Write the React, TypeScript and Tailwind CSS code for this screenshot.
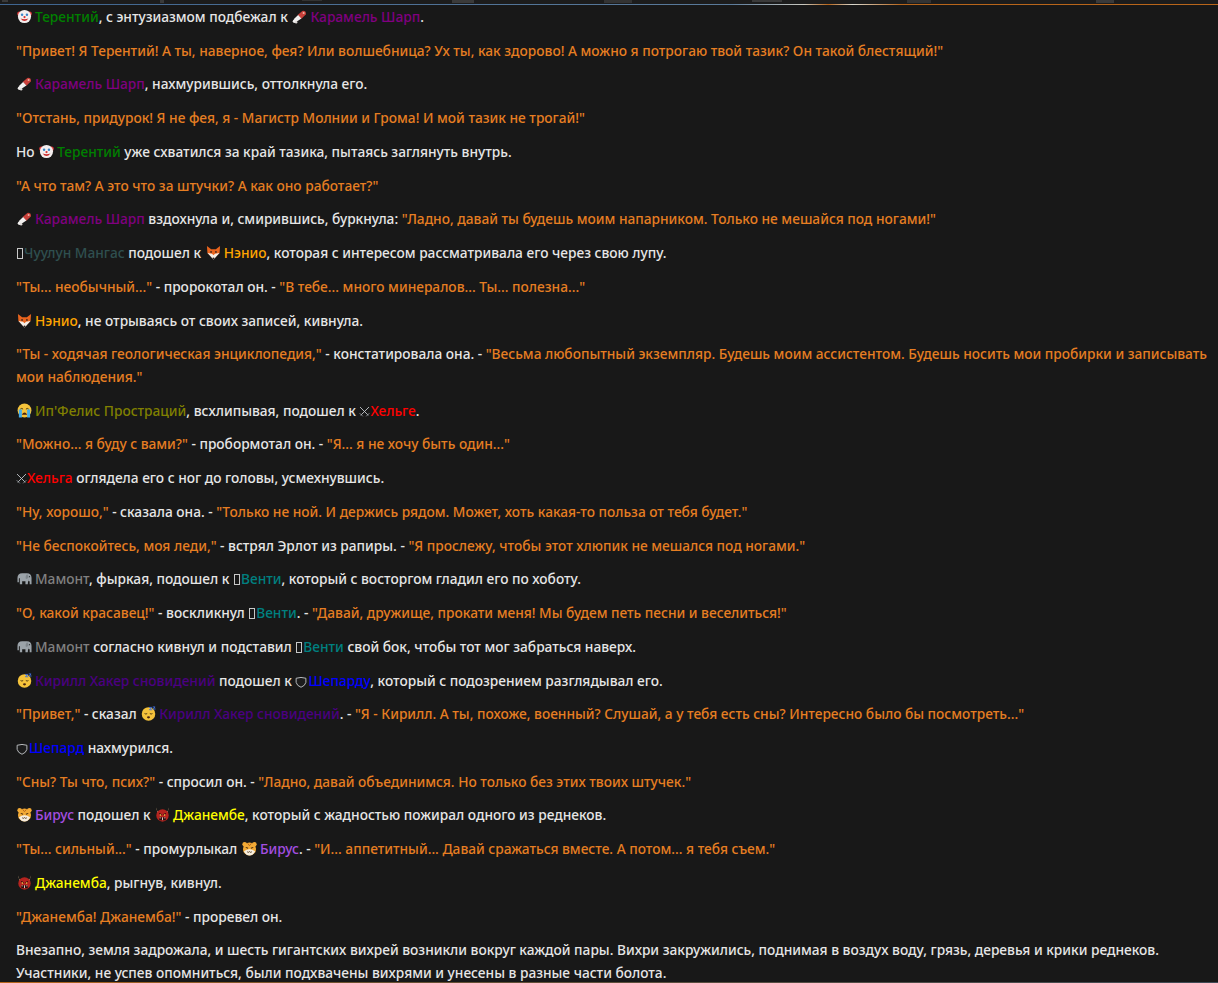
import type { ReactNode } from "react";

// small inline drawings for the emoji in the log
function Icon({ children }: { children: ReactNode }) {
  return (
    <svg viewBox="0 0 16 16" className="inline-block w-[15px] h-[15px] ml-[1px] mr-[3px] align-[-2px]">
      {children}
    </svg>
  );
}

const Clown = () => (
  <Icon>
    <circle cx="2.6" cy="5" r="2.4" fill="#e23b3b" />
    <circle cx="13.4" cy="5" r="2.4" fill="#e23b3b" />
    <circle cx="8" cy="8" r="7" fill="#f3eeee" />
    <circle cx="5.4" cy="6.2" r="1.3" fill="#3a86c8" />
    <circle cx="10.6" cy="6.2" r="1.3" fill="#3a86c8" />
    <circle cx="8" cy="8.6" r="1.2" fill="#d93030" />
    <path d="M3.8 10 Q8 15.4 12.2 10 Q8 11.6 3.8 10Z" fill="#c92b2b" />
  </Icon>
);

const Meat = () => (
  <Icon>
    <path d="M6 6.5 L11 2 Q15 1.5 15 5.5 L10 10.5Z" fill="#c8403a" />
    <circle cx="12.4" cy="4.2" r="1.1" fill="#efb5a5" />
    <path d="M1.8 11 L6.5 6.5 L10 10 L4.4 13.8Z" fill="#f1efee" />
    <circle cx="2.6" cy="13" r="1.8" fill="#f1efee" />
    <circle cx="4.4" cy="14.2" r="1.3" fill="#dcd8d6" />
  </Icon>
);

const Fox = () => (
  <Icon>
    <path d="M1 1 L5.5 4.5 H10.5 L15 1 L14.5 8.5 L8 15 L1.5 8.5Z" fill="#e8641e" />
    <path d="M1.6 8.4 L6.4 9.2 L8 11 L9.6 9.2 L14.4 8.4 L8 15.6Z" fill="#f4ede6" />
    <circle cx="8" cy="14.4" r="1.1" fill="#2b211d" />
    <circle cx="5.4" cy="7.4" r="0.9" fill="#2b211d" />
    <circle cx="10.6" cy="7.4" r="0.9" fill="#2b211d" />
  </Icon>
);

const Crying = () => (
  <Icon>
    <circle cx="8" cy="8" r="7.4" fill="#f5c33b" />
    <path d="M3.5 6.5 Q5 5 6.5 6.5 M9.5 6.5 Q11 5 12.5 6.5" stroke="#4a3510" strokeWidth="1" fill="none" />
    <path d="M5 12.5 Q8 7.5 11 12.5Z" fill="#4a2510" />
    <path d="M2 7 H5.2 V15.5 H2Z M10.8 7 H14 V15.5 H10.8Z" fill="#45aeea" />
  </Icon>
);

const Swords = () => (
  <svg viewBox="0 0 16 16" className="inline-block w-[11px] h-[11px] align-[-1px]">
    <path d="M1.5 1.5 L13.5 13.5 M14.5 1.5 L2.5 13.5" stroke="#c4c8cc" strokeWidth="1.3" fill="none" />
    <path d="M10.5 15 L15 10.5 M5.5 15 L1 10.5" stroke="#8d9196" strokeWidth="1.4" fill="none" />
  </svg>
);

const Elephant = () => (
  <Icon>
    <path d="M0.5 7.5 Q0.5 2.5 5.5 2.5 H10.5 Q15.5 2.5 15.5 7.5 V14 H13.5 V11 H12 V8.5 L11.5 14 H9 V11 H5.5 V14 H3 V7.5 L2 8 V12 H0.5Z" fill="#9ba3a9" />
    <path d="M11 3.5 Q8.5 5 9.5 8.5 Q11.5 8.5 12.5 6.5Z" fill="#7e868c" />
    <circle cx="13.4" cy="6" r="0.6" fill="#23282b" />
  </Icon>
);

const Sleeping = () => (
  <Icon>
    <circle cx="8" cy="8.4" r="7.2" fill="#f5c33b" />
    <path d="M3.8 8 Q5.2 9.2 6.6 8 M9.4 8 Q10.8 9.2 12.2 8" stroke="#4a3510" strokeWidth="1" fill="none" />
    <ellipse cx="8" cy="12" rx="1.6" ry="1.2" fill="#4a2510" />
    <path d="M8.5 1.5 H11.5 L9 4 H12 M12.5 1 H15 L13 3.2 H15.5" stroke="#3f6fd8" strokeWidth="1" fill="none" />
  </Icon>
);

const Shield = () => (
  <svg viewBox="0 0 16 16" className="inline-block w-[12px] h-[12px] mr-[1px] align-[-2px]">
    <path d="M1.5 3 Q8 0.8 14.5 3 V8.5 Q13.5 13 8 15 Q2.5 13 1.5 8.5Z" stroke="#b8bbbe" strokeWidth="1.3" fill="#1c1c1c" />
  </svg>
);

const Tiger = () => (
  <Icon>
    <circle cx="2.8" cy="3.5" r="2.4" fill="#f3aa35" />
    <circle cx="13.2" cy="3.5" r="2.4" fill="#f3aa35" />
    <circle cx="8" cy="8.5" r="7" fill="#f3aa35" />
    <path d="M2 11 Q8 6.5 14 11 Q12 15.5 8 15.5 Q4 15.5 2 11Z" fill="#f5ede0" />
    <path d="M4 6.8 L6.5 7.8 M12 6.8 L9.5 7.8" stroke="#4a2d10" strokeWidth="1.1" />
    <path d="M6 2.5 L8 5 L10 2.5" stroke="#b5651d" strokeWidth="1" fill="none" />
    <path d="M5.5 11.5 Q6.8 12.8 8 11.3 Q9.2 12.8 10.5 11.5" stroke="#4a2d10" strokeWidth="0.9" fill="none" />
  </Icon>
);

const Ogre = () => (
  <Icon>
    <path d="M1.5 0.5 Q1.2 4.5 4.5 5.5 L3 7.5Z M14.5 0.5 Q14.8 4.5 11.5 5.5 L13 7.5Z" fill="#e0bd8c" />
    <circle cx="8" cy="9" r="6.6" fill="#b5231f" />
    <path d="M4.5 6.8 L7 8.2 M11.5 6.8 L9 8.2" stroke="#2a0c0c" strokeWidth="1.2" />
    <circle cx="5.8" cy="8.6" r="0.8" fill="#f7d94c" />
    <circle cx="10.2" cy="8.6" r="0.8" fill="#f7d94c" />
    <rect x="4.5" y="11" width="7" height="3" rx="1" fill="#2a0c0c" />
    <path d="M5.5 11 V12.2 M10.5 11 V12.2 M8 11 V14" stroke="#f3ece0" strokeWidth="0.9" />
  </Icon>
);

// the box the browser draws for a glyph it has no font for
const Tofu = () => (
  <span className="inline-block w-[6px] h-[11px] border border-[#c8c8c8] align-[-1px] ml-[1px] mr-[1px]" />
);

const Q = ({ children }: { children: ReactNode }) => <span className="text-[#e67e22]">{children}</span>;

const Terentiy = () => <><Clown /><span className="text-[#008000]">Терентий</span></>;
const Caramel = () => <><Meat /><span className="text-[#800080]">Карамель Шарп</span></>;
const Chuulun = () => <><Tofu /><span className="text-[#2f4f4f]">Чуулун Мангас</span></>;
const Nenio = () => <><Fox /><span className="text-[#ffa500]">Нэнио</span></>;
const IpFelis = () => <><Crying /><span className="text-[#808000]">Ип'Фелис Простраций</span></>;
const Helga = ({ t }: { t: string }) => <><Swords /><span className="text-[#ff0000]">{t}</span></>;
const Mamont = () => <><Elephant /><span className="text-[#808080]">Мамонт</span></>;
const Venti = () => <><Tofu /><span className="text-[#008080]">Венти</span></>;
const Kirill = () => <><Sleeping /><span className="text-[#4b0082]">Кирилл Хакер сновидений</span></>;
const Shepard = ({ t }: { t: string }) => <><Shield /><span className="text-[#0000ff]">{t}</span></>;
const Birus = () => <><Tiger /><span className="text-[#a44ee0]">Бирус</span></>;
const Janemba = ({ t }: { t: string }) => <><Ogre /><span className="text-[#ffff00]">{t}</span></>;

function P({ children }: { children: ReactNode }) {
  return <p className="mb-[11.15px]">{children}</p>;
}

export default function App() {
  return (
    <div className="flex flex-col h-[983px] w-[1218px] overflow-hidden bg-[#181818] text-[13.72px] leading-[22.6px] font-medium text-[#e6e6e6] font-['Noto_Sans','Open_Sans',sans-serif]">
      <div className="flex h-[4px] shrink-0 bg-[#1c1c1c]">
        <span className="ml-[2px] w-[6px] h-[2px] bg-[#3a3a3a]" />
        <span className="ml-[152px] w-[4px] h-[3px] bg-[#3a3a3a]" />
        <span className="ml-[138px] w-[20px] h-[1px] bg-[#333333]" />
        <span className="ml-[130px] w-[22px] h-[3px] bg-[#3a3a3a]" />
        <span className="ml-[130px] w-[28px] h-[3px] bg-[#333333]" />
        <span className="ml-[120px] w-[30px] h-[2px] bg-[#3a3a3a]" />
        <span className="ml-[125px] w-[24px] h-[3px] bg-[#333333]" />
        <span className="ml-[165px] w-[18px] h-[3px] bg-[#3a3a3a]" />
      </div>
      <div className="h-[1px] shrink-0 bg-[linear-gradient(to_right,#3f6590_0%,#5a7a9a_60%,#c8c8c0_66%,#b8651a_68%,#d8d8d0_70%,#b8651a_74%,#b8651a_100%)]" />
      <div className="flex-1 min-h-0 pl-4 pr-2 pt-[1px]">
        <P><Terentiy />, с энтузиазмом подбежал к <Caramel />.</P>
        <P><Q>"Привет! Я Терентий! А ты, наверное, фея? Или волшебница? Ух ты, как здорово! А можно я потрогаю твой тазик? Он такой блестящий!"</Q></P>
        <P><Caramel />, нахмурившись, оттолкнула его.</P>
        <P><Q>"Отстань, придурок! Я не фея, я - Магистр Молнии и Грома! И мой тазик не трогай!"</Q></P>
        <P>Но <Terentiy /> уже схватился за край тазика, пытаясь заглянуть внутрь.</P>
        <P><Q>"А что там? А это что за штучки? А как оно работает?"</Q></P>
        <P><Caramel /> вздохнула и, смирившись, буркнула: <Q>"Ладно, давай ты будешь моим напарником. Только не мешайся под ногами!"</Q></P>
        <P><Chuulun /> подошел к <Nenio />, которая с интересом рассматривала его через свою лупу.</P>
        <P><Q>"Ты... необычный..."</Q> - пророкотал он. - <Q>"В тебе... много минералов... Ты... полезна..."</Q></P>
        <P><Nenio />, не отрываясь от своих записей, кивнула.</P>
        <P><Q>"Ты - ходячая геологическая энциклопедия,"</Q> - констатировала она. - <Q>"Весьма любопытный экземпляр. Будешь моим ассистентом. Будешь носить мои пробирки и записывать мои наблюдения."</Q></P>
        <P><IpFelis />, всхлипывая, подошел к <Helga t="Хельге" />.</P>
        <P><Q>"Можно... я буду с вами?"</Q> - пробормотал он. - <Q>"Я... я не хочу быть один..."</Q></P>
        <P><Helga t="Хельга" /> оглядела его с ног до головы, усмехнувшись.</P>
        <P><Q>"Ну, хорошо,"</Q> - сказала она. - <Q>"Только не ной. И держись рядом. Может, хоть какая-то польза от тебя будет."</Q></P>
        <P><Q>"Не беспокойтесь, моя леди,"</Q> - встрял Эрлот из рапиры. - <Q>"Я прослежу, чтобы этот хлюпик не мешался под ногами."</Q></P>
        <P><Mamont />, фыркая, подошел к <Venti />, который с восторгом гладил его по хоботу.</P>
        <P><Q>"О, какой красавец!"</Q> - воскликнул <Venti />. - <Q>"Давай, дружище, прокати меня! Мы будем петь песни и веселиться!"</Q></P>
        <P><Mamont /> согласно кивнул и подставил <Venti /> свой бок, чтобы тот мог забраться наверх.</P>
        <P><Kirill /> подошел к <Shepard t="Шепарду" />, который с подозрением разглядывал его.</P>
        <P><Q>"Привет,"</Q> - сказал <Kirill />. - <Q>"Я - Кирилл. А ты, похоже, военный? Слушай, а у тебя есть сны? Интересно было бы посмотреть..."</Q></P>
        <P><Shepard t="Шепард" /> нахмурился.</P>
        <P><Q>"Сны? Ты что, псих?"</Q> - спросил он. - <Q>"Ладно, давай объединимся. Но только без этих твоих штучек."</Q></P>
        <P><Birus /> подошел к <Janemba t="Джанембе" />, который с жадностью пожирал одного из реднеков.</P>
        <P><Q>"Ты... сильный..."</Q> - промурлыкал <Birus />. - <Q>"И... аппетитный... Давай сражаться вместе. А потом... я тебя съем."</Q></P>
        <P><Janemba t="Джанемба" />, рыгнув, кивнул.</P>
        <P><Q>"Джанемба! Джанемба!"</Q> - проревел он.</P>
        <P>Внезапно, земля задрожала, и шесть гигантских вихрей возникли вокруг каждой пары. Вихри закружились, поднимая в воздух воду, грязь, деревья и крики реднеков. Участники, не успев опомниться, были подхвачены вихрями и унесены в разные части болота.</P>
      </div>
      <div className="h-[1px] shrink-0 bg-[linear-gradient(to_right,#b8651a_0%,#6a5030_30%,#3f4a55_100%)]" />
    </div>
  );
}
